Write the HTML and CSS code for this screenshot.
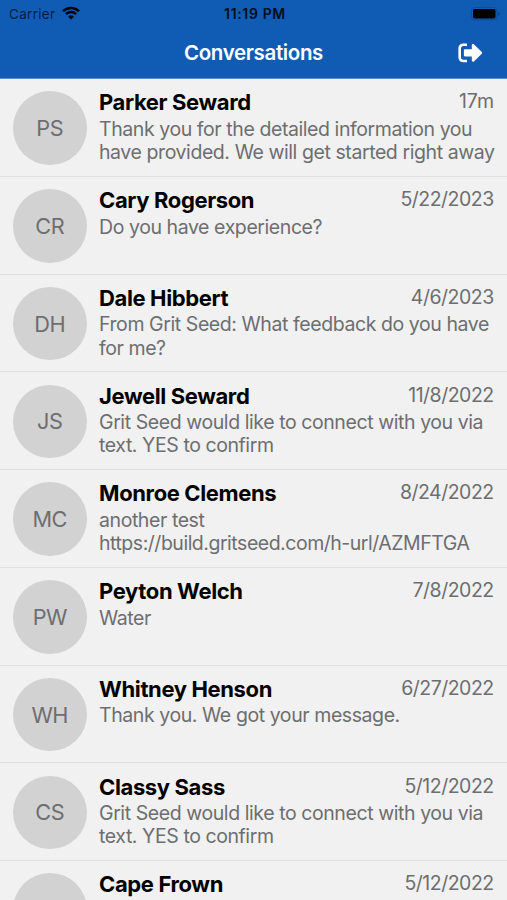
FILE: index.html
```html
<!DOCTYPE html>
<html lang="en">
<head>
  <meta charset="UTF-8" />
  <meta name="viewport" content="width=device-width, initial-scale=1.0"/>
  <title>Conversations</title>
  <link rel="stylesheet" href="styles.css">
</head>
<body>

  <header class="header">
    <div class="status-bar">
      <div class="status-left">
        <span class="carrier">Carrier</span>
        <svg class="wifi" viewBox="0 0 18 14" fill="none" stroke="#000" stroke-width="2.5">
          <path d="M1 5.2a11.4 11.4 0 0 1 16 0"/>
          <path d="M3.9 8.2a7.3 7.3 0 0 1 10.2 0"/>
          <path d="M9 13.6L6.1 10.7a4.2 4.2 0 0 1 5.8 0z" fill="#000" stroke="none"/>
        </svg>
      </div>
      <span class="clock">11:19 PM</span>
      <div class="status-right">
        <svg class="battery" viewBox="0 0 30 14">
          <rect x="0.5" y="0.5" width="25.5" height="12.5" rx="3.2" fill="none" stroke="#0b4c9d"/>
          <rect x="2" y="2" width="22.5" height="9.5" rx="1.8" fill="#000"/>
          <path d="M27.3 4.6c2 .8 2 3.5 0 4.3z" fill="#07418f"/>
        </svg>
      </div>
    </div>
    <div class="nav-bar">
      <h1>Conversations</h1>
      <button class="logout-btn" aria-label="Log out">
        <svg viewBox="0 0 25 20">
          <path d="M9 1.7H5.2A3.5 3.5 0 0 0 1.7 5.2v9.3A3.5 3.5 0 0 0 5.2 18H9" fill="none" stroke="#fff" stroke-width="2.6"/>
          <path d="M7 6.3h6.8V2.1c0-1.2 1.3-1.6 2.1-.8l7.9 7.7c.5.5.5 1.2 0 1.7l-7.9 7.7c-.8.8-2.1.3-2.1-.8v-4.2H7c-.7 0-1.1-.5-1.1-1.1V7.4c0-.6.4-1.1 1.1-1.1z" fill="#fff"/>
        </svg>
      </button>
    </div>
  </header>

  <main class="conversation-list">
    <div class="conversation">
      <div class="avatar">PS</div>
      <div class="content">
        <div class="top-row"><h2>Parker Seward</h2><span class="date age">17m</span></div>
        <p>Thank you for the detailed information you<br>have provided. We will get started right away</p>
      </div>
    </div>
    <div class="conversation">
      <div class="avatar">CR</div>
      <div class="content">
        <div class="top-row"><h2>Cary Rogerson</h2><span class="date">5/22/2023</span></div>
        <p>Do you have experience?</p>
      </div>
    </div>
    <div class="conversation">
      <div class="avatar">DH</div>
      <div class="content">
        <div class="top-row"><h2>Dale Hibbert</h2><span class="date">4/6/2023</span></div>
        <p>From Grit Seed: What feedback do you have<br>for me?</p>
      </div>
    </div>
    <div class="conversation">
      <div class="avatar">JS</div>
      <div class="content">
        <div class="top-row"><h2>Jewell Seward</h2><span class="date">11/8/2022</span></div>
        <p>Grit Seed would like to connect with you via<br>text. YES to confirm</p>
      </div>
    </div>
    <div class="conversation">
      <div class="avatar">MC</div>
      <div class="content">
        <div class="top-row"><h2>Monroe Clemens</h2><span class="date">8/24/2022</span></div>
        <p>another test<br><span class="url">https://build.gritseed.com/h-url/AZMFTGA</span></p>
      </div>
    </div>
    <div class="conversation">
      <div class="avatar">PW</div>
      <div class="content">
        <div class="top-row"><h2>Peyton Welch</h2><span class="date">7/8/2022</span></div>
        <p>Water</p>
      </div>
    </div>
    <div class="conversation">
      <div class="avatar">WH</div>
      <div class="content">
        <div class="top-row"><h2>Whitney Henson</h2><span class="date">6/27/2022</span></div>
        <p>Thank you. We got your message.</p>
      </div>
    </div>
    <div class="conversation">
      <div class="avatar">CS</div>
      <div class="content">
        <div class="top-row"><h2>Classy Sass</h2><span class="date">5/12/2022</span></div>
        <p>Grit Seed would like to connect with you via<br>text. YES to confirm</p>
      </div>
    </div>
    <div class="conversation">
      <div class="avatar"></div>
      <div class="content">
        <div class="top-row"><h2>Cape Frown</h2><span class="date">5/12/2022</span></div>
      </div>
    </div>
  </main>

</body>
</html>
```
FILE: styles.css
```css
:root {
  --primary: #105cb4;
  --light: #f1f1f1;
  --gray: #6c6e70;
  --avatar: #d2d2d2;
  --line: #dfdfdf;
}

* {
  box-sizing: border-box;
  margin: 0;
  padding: 0;
}

body {
  font-family: Inter, "Liberation Sans", sans-serif;
  background-color: var(--light);
  color: #000;
}

.header {
  height: 79px;
  background-color: var(--primary);
  border-bottom: 1px solid #5a90d0;
}

.status-bar {
  display: grid;
  grid-template-columns: 1fr auto 1fr;
  align-items: center;
  height: 27px;
  padding: 0 6px 0 9px;
}

.status-left {
  display: flex;
  align-items: center;
  gap: 7px;
}

.carrier {
  font-size: 13.5px;
  letter-spacing: 0.3px;
  color: #041e3e;
}

.wifi {
  width: 18px;
  height: 14px;
  margin-top: -2px;
}

.clock {
  font-size: 14px;
  font-weight: 600;
  letter-spacing: 0.65px;
  color: #020d1c;
}

.status-right {
  display: flex;
  justify-content: flex-end;
}

.battery {
  width: 30px;
  height: 14px;
}

.nav-bar {
  display: grid;
  grid-template-columns: 1fr auto 1fr;
  align-items: center;
  height: 51px;
  padding: 0 24px;
}

.nav-bar h1 {
  grid-column: 2;
  font-size: 20.5px;
  font-weight: 600;
  letter-spacing: -0.35px;
  color: #fff;
}

.logout-btn {
  justify-self: end;
  width: 25px;
  height: 20px;
  background: none;
  border: none;
}

.logout-btn svg {
  display: block;
  width: 25px;
  height: 20px;
}

.conversation-list {
  height: 821px;
  overflow: hidden;
}

.conversation {
  display: flex;
  gap: 12.5px;
  height: 97.75px;
  padding: 12.4px 13px 0;
  border-bottom: 1px solid var(--line);
}

.avatar {
  display: flex;
  flex: none;
  align-items: center;
  justify-content: center;
  width: 73.5px;
  height: 73.5px;
  border-radius: 50%;
  background-color: var(--avatar);
  color: var(--gray);
  font-size: 21.7px;
  letter-spacing: -0.5px;
}

.content {
  flex: 1;
  min-width: 0;
}

.top-row {
  display: flex;
  justify-content: space-between;
  height: 26.4px;
}

.conversation h2 {
  font-size: 22px;
  font-weight: 700;
  line-height: 23.4px;
  letter-spacing: -0.37px;
  white-space: nowrap;
}

.date {
  font-size: 19.5px;
  line-height: 21.4px;
  letter-spacing: -0.5px;
  margin-right: 0.3px;
  color: var(--gray);
}

.date.age {
  letter-spacing: 0;
  margin-right: 0;
}

.conversation p {
  font-size: 19.5px;
  line-height: 23.4px;
  letter-spacing: -0.42px;
  white-space: nowrap;
  color: var(--gray);
}

.conversation .url {
  letter-spacing: -0.48px;
}
```
